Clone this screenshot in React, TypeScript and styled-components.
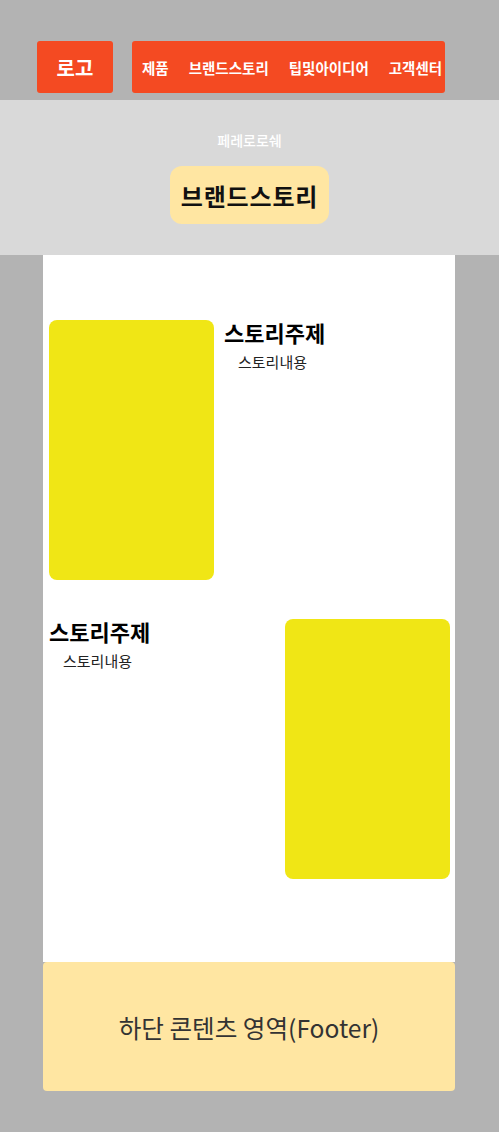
import React from "react";
import styled, { createGlobalStyle } from "styled-components";

const Global = createGlobalStyle`
  html, body { margin: 0; padding: 0; }
  body {
    background: #b3b3b3;
    font-family: "Noto Sans CJK KR", "Noto Sans", sans-serif;
  }
`;

const Page = styled.div`
  min-height: 1132px;
  background: #b3b3b3;
  display: flex;
  flex-direction: column;
`;

const Header = styled.header`
  height: 100px;
  box-sizing: border-box;
  padding: 41px 0 0 37px;
  display: flex;
  align-items: flex-start;
  gap: 19px;
`;

const Logo = styled.div`
  width: 76px;
  height: 52px;
  background: #f44a22;
  border-radius: 3px;
  color: #fff;
  font-size: 20px;
  font-weight: 700;
  display: flex;
  align-items: center;
  justify-content: center;
`;

const Nav = styled.nav`
  width: 313px;
  height: 52px;
  box-sizing: border-box;
  background: #f44a22;
  border-radius: 3px;
  display: flex;
  align-items: center;
  padding-left: 10px;
  gap: 20px;
  overflow: hidden;
`;

const NavItem = styled.a`
  color: #fff;
  font-size: 14.5px;
  font-weight: 700;
  white-space: nowrap;
`;

const Hero = styled.section`
  height: 155px;
  background: #d9d9d9;
  display: flex;
  flex-direction: column;
  align-items: center;
  padding-top: 30px;
  box-sizing: border-box;
`;

const Sub = styled.p`
  margin: 0;
  color: #fff;
  font-size: 14px;
  font-weight: 500;
  line-height: 20px;
`;

const Pill = styled.h1`
  margin: 16px 0 0;
  height: 58px;
  box-sizing: border-box;
  padding: 0 11px;
  background: #ffe6a2;
  border-radius: 12px;
  color: #111;
  font-size: 24px;
  font-weight: 700;
  letter-spacing: 0.8px;
  display: flex;
  align-items: center;
`;

const Main = styled.main`
  margin: 0 44px 0 43px;
  background: #fff;
  padding: 65px 5px 83px 6px;
  display: flex;
  flex-direction: column;
  gap: 39px;
`;

const Row = styled.div<{ $reverse?: boolean }>`
  display: flex;
  flex-direction: ${(p) => (p.$reverse ? "row-reverse" : "row")};
  justify-content: ${(p) => (p.$reverse ? "space-between" : "flex-start")};
  gap: 10px;
`;

const Picture = styled.div`
  width: 165px;
  height: 260px;
  flex: none;
  background: #f0e615;
  border-radius: 8px;
`;

const Text = styled.div`
  display: flex;
  flex-direction: column;
`;

const Title = styled.h2`
  margin: -4px 0 0;
  font-size: 22px;
  font-weight: 700;
  line-height: 32px;
  color: #000;
`;

const Body = styled.p`
  margin: 4px 0 0 14px;
  font-size: 15px;
  line-height: 20px;
  color: #222;
`;

const Footer = styled.footer`
  margin: 0 44px 0 43px;
  height: 129px;
  background: #ffe6a2;
  border-radius: 4px;
  display: flex;
  align-items: center;
  justify-content: center;
  font-size: 24.6px;
  color: #333;
`;

export default function App() {
  return (
    <Page>
      <Global />
      <Header>
        <Logo>로고</Logo>
        <Nav>
          <NavItem>제품</NavItem>
          <NavItem>브랜드스토리</NavItem>
          <NavItem>팁및아이디어</NavItem>
          <NavItem>고객센터</NavItem>
        </Nav>
      </Header>
      <Hero>
        <Sub>페레로로쉐</Sub>
        <Pill>브랜드스토리</Pill>
      </Hero>
      <Main>
        <Row>
          <Picture />
          <Text>
            <Title>스토리주제</Title>
            <Body>스토리내용</Body>
          </Text>
        </Row>
        <Row $reverse>
          <Picture />
          <Text>
            <Title>스토리주제</Title>
            <Body>스토리내용</Body>
          </Text>
        </Row>
      </Main>
      <Footer>하단 콘텐츠 영역(Footer)</Footer>
    </Page>
  );
}
